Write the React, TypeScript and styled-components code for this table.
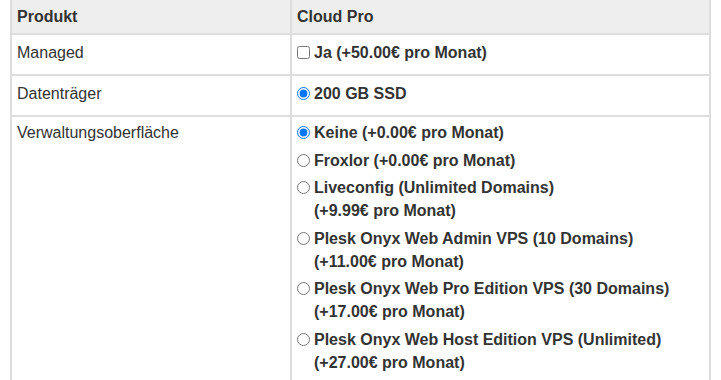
import React from "react";
import styled, { createGlobalStyle } from "styled-components";

const Global = createGlobalStyle`
  html, body { margin: 0; padding: 0; background: #fff; }
  body { font-family: "Liberation Sans", Arial, sans-serif; color: #333; }
`;

const Page = styled.div`
  padding: 0 10px 0 10px;
  margin-top: -2px;
`;

const Table = styled.table`
  width: 701px;
  border-collapse: collapse;
  font-size: 16px;
  line-height: 23px;
  table-layout: fixed;
`;

const Th = styled.th<{ $w?: string }>`
  background: #eeeeee;
  border: 2px solid #dddddd;
  padding: 5px 5px 5px 5px;
  text-align: left;
  font-weight: bold;
  color: #333;
  ${(p) => (p.$w ? `width: ${p.$w};` : "")}
`;

const Td = styled.td<{ $bold?: boolean; $top?: number }>`
  border: 2px solid #dddddd;
  padding: ${(p) => p.$top ?? 6}px 5px ${(p) => 16 - (p.$top ?? 6)}px 5px;
  vertical-align: top;
  font-weight: ${(p) => (p.$bold ? "bold" : "normal")};
  color: #333;
`;

const Options = styled.div`
  display: flex;
  flex-direction: column;
  gap: 4.6px;
`;

const Option = styled.label`
  display: flex;
  align-items: flex-start;
  cursor: pointer;
`;

const Control = styled.input`
  width: 13px;
  height: 13px;
  margin: 5px 4px 0 0;
  flex: 0 0 auto;
`;

const Text = styled.span`
  flex: 1 1 auto;
`;

const panels = [
  { name: "Keine", text: "Keine (+0.00€ pro Monat)", checked: true },
  { name: "Froxlor", text: "Froxlor (+0.00€ pro Monat)" },
  {
    name: "Liveconfig",
    text: (
      <>
        Liveconfig (Unlimited Domains)
        <br />
        (+9.99€ pro Monat)
      </>
    ),
  },
  {
    name: "Admin",
    text: (
      <>
        Plesk Onyx Web Admin VPS (10 Domains)
        <br />
        (+11.00€ pro Monat)
      </>
    ),
  },
  {
    name: "Pro",
    text: (
      <>
        Plesk Onyx Web Pro Edition VPS (30 Domains)
        <br />
        (+17.00€ pro Monat)
      </>
    ),
  },
  {
    name: "Host",
    text: (
      <>
        Plesk Onyx Web Host Edition VPS (Unlimited)
        <br />
        (+27.00€ pro Monat)
      </>
    ),
  },
];

export default function App() {
  return (
    <>
      <Global />
      <Page>
        <Table>
          <thead>
            <tr>
              <Th $w="268px">Produkt</Th>
              <Th>Cloud Pro</Th>
            </tr>
          </thead>
          <tbody>
            <tr>
              <Td>Managed</Td>
              <Td $bold>
                <Option>
                  <Control type="checkbox" />
                  <Text>Ja (+50.00€ pro Monat)</Text>
                </Option>
              </Td>
            </tr>
            <tr>
              <Td>Datenträger</Td>
              <Td $bold>
                <Option>
                  <Control type="radio" name="disk" defaultChecked />
                  <Text>200 GB SSD</Text>
                </Option>
              </Td>
            </tr>
            <tr>
              <Td $top={4}>Verwaltungsoberfläche</Td>
              <Td $bold $top={4}>
                <Options>
                  {panels.map((p) => (
                    <Option key={p.name}>
                      <Control
                        type="radio"
                        name="panel"
                        defaultChecked={p.checked}
                      />
                      <Text>{p.text}</Text>
                    </Option>
                  ))}
                </Options>
              </Td>
            </tr>
          </tbody>
        </Table>
      </Page>
    </>
  );
}
